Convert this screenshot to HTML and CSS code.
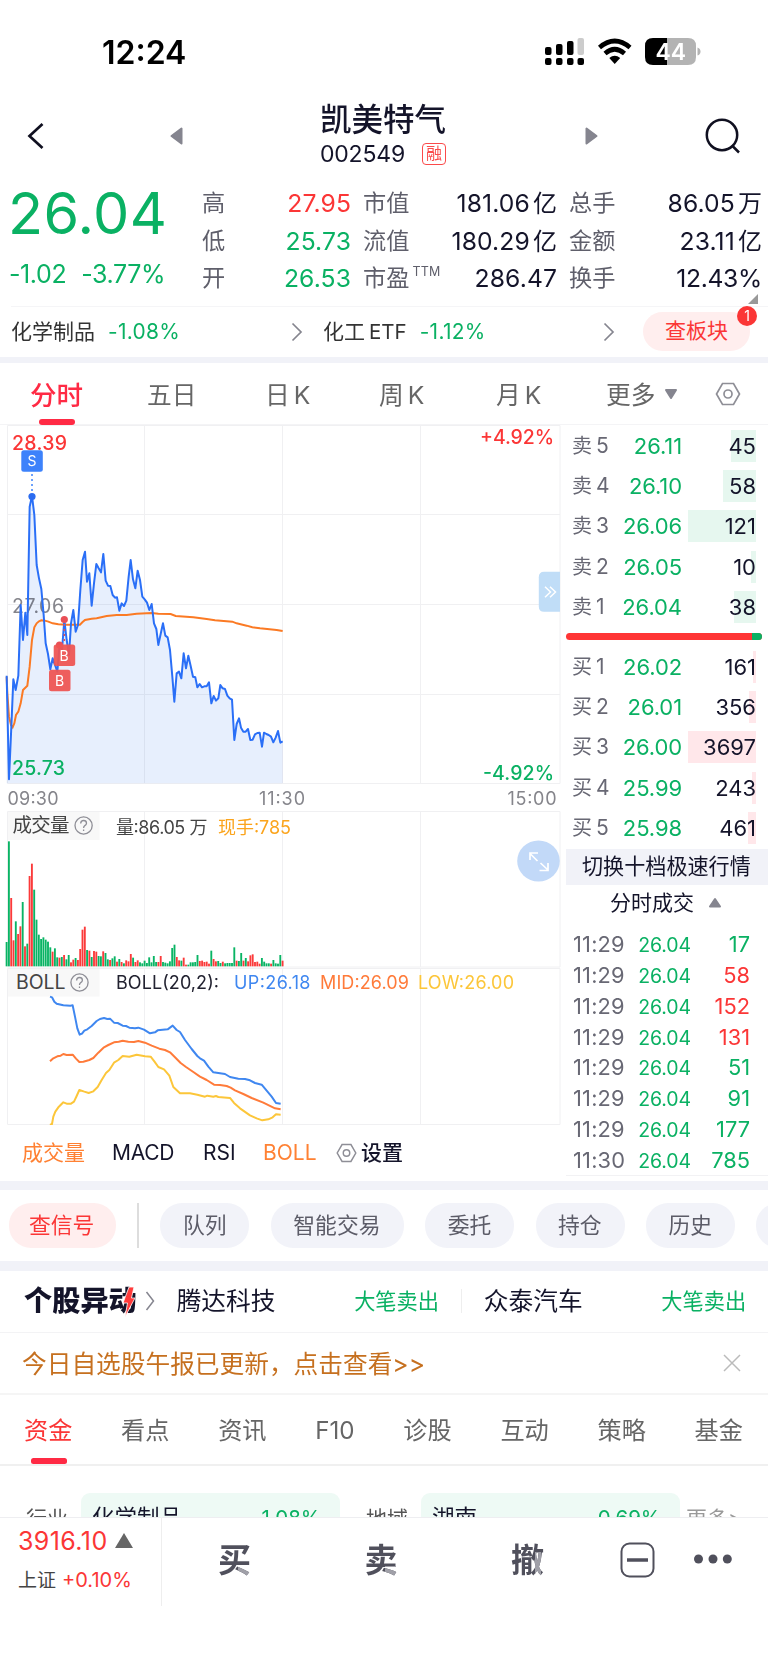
FILE: index.html
```
<!DOCTYPE html>
<html lang="zh-CN">
<head>
<meta charset="utf-8">
<title>凯美特气 002549</title>
<link rel="stylesheet" href="styles.css">
</head>
<body>
<div class="phone">
  <div class="status">
    <span class="clock">12:24</span>
    <svg class="status-icons" width="156" height="28" viewBox="545 38 156 28">
      <g fill="#000">
        <rect x="545" y="47" width="6.5" height="8" rx="2"/><rect x="556" y="44" width="6.5" height="11" rx="2"/><rect x="567" y="41" width="6.5" height="14" rx="2"/>
        <rect x="577.5" y="38" width="6.5" height="17" rx="2" fill="#ccc"/>
        <rect x="545" y="58" width="6.5" height="7" rx="2"/><rect x="556" y="58" width="6.5" height="7" rx="2"/><rect x="567" y="58" width="6.5" height="7" rx="2"/><rect x="577.5" y="58" width="6.5" height="7" rx="2"/>
      </g>
      <g fill="none" stroke="#000" stroke-width="4.6"><path d="M599.5 47.5Q614.7 34.500 630 47.500"/><path d="M605 53.500Q614.700 45 624.500 53.500"/></g>
      <path d="M609.300 58Q614.700 53.500 620.200 58L614.700 64Z"/>
      <path d="M653 38H667V65H653Q645 65 645 57V46Q645 38 653 38Z"/><path d="M667 38H688Q696 38 696 46V57Q696 65 688 65H667Z" fill="#b3b3b3"/>
      <path d="M697.500 47.500Q700.500 48.500 700.500 51.500T697.500 55.500Z" fill="#b3b3b3"/>
      <text x="670.700" y="60" class="battery-text">44</text>
    </svg>
  </div>

  <header class="header">
    <svg class="back" width="18" height="28" viewBox="0 0 18 28"><path d="M15.500 2L2.500 14 15.500 26" fill="none" stroke="#101020" stroke-width="2.700"/></svg>
    <svg class="prev" width="13" height="18" viewBox="0 0 13 18"><path d="M11.500 1.500V16.500L1.500 9Z" fill="#85858f" stroke="#85858f" stroke-width="2" stroke-linejoin="round"/></svg>
    <div class="title">
      <div class="name">凯美特气</div>
      <div class="code"><span>002549</span><i>融</i></div>
    </div>
    <svg class="next" width="13" height="18" viewBox="0 0 13 18"><path d="M1.500 1.500V16.500L11.500 9Z" fill="#85858f" stroke="#85858f" stroke-width="2" stroke-linejoin="round"/></svg>
    <svg class="search" width="36" height="36" viewBox="0 0 36 36"><g fill="none" stroke="#101020" stroke-width="2.500"><circle cx="17" cy="17" r="15.200"/><path d="M27 27.500L34 34.500"/></g></svg>
  </header>

  <section class="quote">
    <div class="last"><div class="price">26.04</div><div class="change"><span>-1.02</span><span>-3.77%</span></div></div>
    <dl class="stats">
      <dt>高</dt><dd class="red">27.95</dd><dt>市值</dt><dd>181.06<b>亿</b></dd><dt>总手</dt><dd>86.05<b>万</b></dd>
      <dt>低</dt><dd class="green">25.73</dd><dt>流值</dt><dd>180.29<b>亿</b></dd><dt>金额</dt><dd>23.11<b>亿</b></dd>
      <dt>开</dt><dd class="green">26.53</dd><dt>市盈<sup>TTM</sup></dt><dd>286.47</dd><dt>换手</dt><dd class="tight">12.43%</dd>
    </dl>
    <svg class="corner" width="10" height="10" viewBox="0 0 10 10"><path d="M10 0V10H0Z" fill="#999"/></svg>
  </section>

  <section class="sector">
    <div class="sector-item first">化学制品<em>-1.08%</em><svg width="12" height="20" viewBox="0 0 12 20"><path d="M1.500 1.500L10 10 1.500 18.500" fill="none" stroke="#85858f" stroke-width="1.700"/></svg></div>
    <div class="sector-item">化工<u>ETF</u><em>-1.12%</em><svg width="12" height="20" viewBox="0 0 12 20"><path d="M1.500 1.500L10 10 1.500 18.500" fill="none" stroke="#85858f" stroke-width="1.700"/></svg></div>
    <div class="sector-pill">查板块<span class="dot">1</span></div>
  </section>

  <nav class="periods">
    <span class="on">分时</span><span>五日</span><span>日<u>K</u></span><span>周<u>K</u></span><span>月<u>K</u></span>
    <span class="more">更多<svg width="14" height="11" viewBox="0 0 14 11"><path d="M2 1H12L7 9Z" fill="#85858f" stroke="#85858f" stroke-width="2" stroke-linejoin="round"/></svg></span>
    <svg class="hex" width="26" height="24" viewBox="0 0 26 24"><g fill="none" stroke="#8e8e96" stroke-width="1.700"><path d="M7.500 1.500H18.500L24.500 12 18.500 22.500H7.500L1.500 12Z"/><circle cx="13" cy="12" r="4"/></g></svg>
  </nav>

  <main class="market">
    <div class="charts">
      <svg class="chart" width="562" height="386" viewBox="0 425 562 386">
        <path class="grid" d="M7.500 425.500H560V783.500H7.500ZM7.500 514.500H560M7.500 604.500H560M7.500 694.500H560M144.500 425V783M282.500 425V783M420.500 425V783"/>
        <text x="12" y="612.500" textLength="52" class="t19 axis">27.06</text>
        <g transform="translate(0 410) scale(.33333)">
          <path class="area" id="price-area"/>
          <path class="avg" d="M20 800L22 850 27 920 33 945 38 952 43 940 48 915 55 905 62 880 69 840 82 827 89 770 96 690 103 652 110 640 117 634 124 631 135 632 145 635 158 640 175 643 200 644 240 644 247 637 255 630 275 626 290 625 320 618 350 615 380 615 410 611 455 609 475 611 512 612 527 618 580 622 620 627 645 631 697 635 710 640 740 647 757 652 780 655 830 660 848 663"/>
          <path class="line" id="price-line"/>
        </g>
        <text x="12" y="449.500" textLength="55" class="t19 red">28.39</text>
        <text x="12" y="774.500" textLength="53" class="t19 green">25.73</text>
        <text x="554" y="444.300" text-anchor="end" textLength="74" class="t19 red">+4.92%</text>
        <text x="554" y="780" text-anchor="end" textLength="71" class="t19 green">-4.92%</text>
        <path d="M32 474V492" stroke="#3d82fb" stroke-width="1.500" stroke-dasharray="2 3"/><circle cx="32" cy="496.500" r="3.600" fill="#2b6cf0"/>
        <rect x="21.300" y="450.300" width="21.500" height="21.500" rx="2.500" fill="#3d82fb"/><text x="32" y="466" text-anchor="middle" class="mark">S</text>
        <path d="M64.300 624V644" stroke="#e35252" stroke-width="1.500" stroke-dasharray="2 3"/><circle cx="64.300" cy="619.500" r="3.600" fill="#e94f56"/><circle cx="59.500" cy="645" r="3.600" fill="#e94f56"/>
        <g fill="#ee5553" fill-opacity=".94"><rect x="53.700" y="644.500" width="21.500" height="21.500" rx="2.500"/><rect x="49" y="669.800" width="21.500" height="21.500" rx="2.500"/></g>
        <text x="64" y="660.500" text-anchor="middle" class="mark">B</text><text x="59.500" y="686" text-anchor="middle" class="mark">B</text>
        <path d="M560 571.500V611.500H544Q538.800 611.500 538.800 606V577Q538.800 571.500 544 571.500Z" transform="translate(0 .2)" fill="#c0ddf7"/>
        <path d="M545 587L550.500 592.300 545 597.600M550 587L555.500 592.300 550 597.600" transform="translate(0 -.3)" fill="none" stroke="#fff" stroke-width="1.500"/>
        <text x="7.500" y="804.500" textLength="51" class="t18 axis">09:30</text><text x="282" y="804.500" text-anchor="middle" textLength="46" class="t18 axis">11:30</text><text x="556.500" y="804.500" text-anchor="end" textLength="49" class="t18 axis">15:00</text>
      </svg>
      <svg class="chart" width="562" height="157" viewBox="0 811 562 157">
        <path class="grid" d="M7.500 811.500H560V967H7.500ZM144.500 811V967M282.500 811V967M420.500 811V967"/>
        <rect x="8" y="812" width="91.500" height="28" fill="#f8f8f8"/>
        <text x="12.500" y="832.300" textLength="57" class="t19 ink">成交量</text>
        <g class="help"><circle cx="83.600" cy="825.500" r="8.600"/><path d="M80.700 823.500Q80.800 820.500 83.600 820.500T86.500 823.200Q86.400 824.700 84.800 825.600 83.600 826.300 83.600 828M83.600 829.600V831"/></g>
        <text x="116" y="833.700" textLength="91.500" class="t18 ink">量:86.05 万</text><text x="218" y="833.700" textLength="73" class="t18 amber">现手:785</text>
        <g id="volume" transform="translate(0 800) scale(.33333)"></g>
        <ellipse cx="538.500" cy="861" rx="21.300" ry="20.500" fill="#c2d9f8"/>
        <path d="M538 860.500L530.500 853M530.500 859.500V852.500H538.500M541 862.500L548.500 869.500M548.500 862.500V870H540" fill="none" stroke="#fff" stroke-width="1.700" transform="translate(-.5 .5)"/>
      </svg>
      <svg class="chart" width="562" height="157" viewBox="0 968 562 157">
        <path class="grid" d="M7.500 968.500H560V1124.500H7.500ZM144.500 968V1125M282.500 968V1125M420.500 968V1125"/>
        <rect x="8" y="969" width="91.500" height="27.500" fill="#f8f8f8"/>
        <text x="16" y="989" textLength="49.500" class="t19 ink">BOLL</text>
        <g class="help"><circle cx="79.500" cy="982.500" r="8.600"/><path transform="translate(-4.100 157)" d="M80.700 823.500Q80.800 820.500 83.600 820.500T86.500 823.200Q86.400 824.700 84.800 825.600 83.600 826.300 83.600 828M83.600 829.600V831"/></g>
        <text x="116" y="989.300" textLength="103" class="t18 dark">BOLL(20,2):</text>
        <text x="234" y="989.300" textLength="76.500" class="t18 up">UP:26.18</text><text x="320" y="989.300" textLength="89" class="t18 mid">MID:26.09</text><text x="418" y="989.300" textLength="96" class="t18 low">LOW:26.00</text>
        <g class="boll" transform="translate(0 800) scale(.33333)">
          <path stroke="#3f87f0" d="M150 590L156 592 163 605 170 611 190 616 211 617 218 616 225 650 232 685 239 704 246 701 253 692 262 688 275 678 290 663 300 657 312 654 322 657 330 656 342 668 353 669 368 677 378 678 388 683 405 685 415 683 432 689 450 700 465 697 473 691 503 688 518 677 530 690 540 696 555 720 575 747 592 768 600 775 612 782 625 800 640 817 675 822 690 831 715 836 735 837 750 841 765 849 785 854 800 872 815 890 828 909 842 911"/>
          <path stroke="#ff7b3a" d="M150 784L160 775 172 769 182 767 190 762 200 765 218 764 228 776 238 786 250 785 268 780 280 774 295 758 312 742 325 735 342 727 356 725 368 722 385 725 402 726 415 723 435 728 455 737 478 746 495 750 510 757 525 772 542 789 558 801 580 816 600 830 620 840 642 854 660 855 680 858 692 863 705 871 730 882 755 894 790 908 825 925 842 928"/>
          <path stroke="#fcc63a" d="M150 975L156 972 160 950 166 935 175 922 190 907 200 911 213 911 222 905 230 888 238 870 253 875 266 879 280 874 293 861 305 840 318 819 328 810 342 788 355 780 368 768 388 770 410 764 435 769 452 770 463 784 475 801 492 808 508 827 520 861 540 880 570 880 592 884 615 890 622 887 640 890 648 888 655 891 690 894 702 909 720 925 750 946 770 955 787 961 805 958 818 952 828 943 842 944"/>
        </g>
      </svg>
      <div class="indicators">
        <span class="on i1">成交量</span><span class="i2">MACD</span><span class="i3">RSI</span><span class="on i4">BOLL</span>
        <svg width="21" height="20" viewBox="0 0 26 24"><g fill="none" stroke="#8e8e96" stroke-width="1.800"><path d="M7.500 1.500H18.500L24.500 12 18.500 22.500H7.500L1.500 12Z"/><circle cx="13" cy="12" r="4"/></g></svg><strong>设置</strong>
      </div>
    </div>

    <aside class="book">
      <div class="levels">
        <div class="lv"><span>卖<u>5</u></span><em>26.11</em><b>45</b><i class="ask" style="width:25px"></i></div>
        <div class="lv"><span>卖<u>4</u></span><em>26.10</em><b>58</b><i class="ask" style="width:33px"></i></div>
        <div class="lv"><span>卖<u>3</u></span><em>26.06</em><b>121</b><i class="ask" style="width:68px"></i></div>
        <div class="lv"><span>卖<u>2</u></span><em>26.05</em><b>10</b><i class="ask" style="width:5px"></i></div>
        <div class="lv"><span>卖<u>1</u></span><em>26.04</em><b>38</b><i class="ask" style="width:22px"></i></div>
      </div>
      <div class="ratio"><i></i></div>
      <div class="levels">
        <div class="lv"><span>买<u>1</u></span><em>26.02</em><b>161</b><i class="bid" style="width:3px"></i></div>
        <div class="lv"><span>买<u>2</u></span><em>26.01</em><b>356</b><i class="bid" style="width:7px"></i></div>
        <div class="lv"><span>买<u>3</u></span><em>26.00</em><b>3697</b><i class="bid" style="width:68px"></i></div>
        <div class="lv"><span>买<u>4</u></span><em>25.99</em><b>243</b><i class="bid" style="width:4px"></i></div>
        <div class="lv"><span>买<u>5</u></span><em>25.98</em><b>461</b><i class="bid" style="width:8px"></i></div>
      </div>
      <div class="switch">切换十档极速行情</div>
      <div class="ticks-title">分时成交<svg width="14" height="11" viewBox="0 0 14 11"><path d="M2 9.500H12L7 2Z" fill="#85858f" stroke="#85858f" stroke-width="2" stroke-linejoin="round"/></svg></div>
      <div class="ticks">
        <div class="tk"><span>11:29</span><em>26.04</em><b class="red">33</b></div>
        <div class="tk"><span>11:29</span><em>26.04</em><b>17</b></div>
        <div class="tk"><span>11:29</span><em>26.04</em><b class="red">58</b></div>
        <div class="tk"><span>11:29</span><em>26.04</em><b class="red">152</b></div>
        <div class="tk"><span>11:29</span><em>26.04</em><b class="red">131</b></div>
        <div class="tk"><span>11:29</span><em>26.04</em><b>51</b></div>
        <div class="tk"><span>11:29</span><em>26.04</em><b>91</b></div>
        <div class="tk"><span>11:29</span><em>26.04</em><b>177</b></div>
        <div class="tk"><span>11:30</span><em>26.04</em><b>785</b></div>
      </div>
    </aside>
  </main>

  <div class="chips">
    <span class="hot">查信号</span><i></i><span>队列</span><span>智能交易</span><span>委托</span><span>持仓</span><span>历史</span><span>预警</span>
  </div>

  <div class="movers">
    <span class="logo">个股异动<svg width="12" height="30" viewBox="0 0 12 30"><path d="M6 0H11L8.500 11H12L2 30 4.500 16H0Z" fill="#ff3b3b" stroke="#fff" stroke-width=".8"/></svg></span>
    <svg class="chev" width="10" height="22" viewBox="0 0 10 22"><path d="M1.500 2L8.500 11 1.500 20" fill="none" stroke="#85858f" stroke-width="1.500"/></svg>
    <span class="m1">腾达科技</span><em>大笔卖出</em><i></i><span class="m2">众泰汽车</span><em class="e2">大笔卖出</em>
  </div>

  <div class="notice"><span>今日自选股午报已更新，点击查看&gt;&gt;</span><svg width="18" height="18" viewBox="0 0 18 18"><path d="M1 1L17 17M17 1L1 17" stroke="#bbb" stroke-width="1.500"/></svg></div>

  <nav class="topics"><span class="on">资金</span><span>看点</span><span>资讯</span><span>F10</span><span>诊股</span><span>互动</span><span>策略</span><span>基金</span></nav>

  <div class="related">
    <span class="r-label">行业</span><div class="r-card">化学制品<em>-1.08%</em></div>
    <span class="r-label second">地域</span><div class="r-card">湖南<em>-0.69%</em></div><span class="r-more">更多&gt;</span>
  </div>

  <footer class="dock">
    <div class="index"><div class="idx-top">3916.10<svg width="18" height="15" viewBox="0 0 18 15"><path d="M9 0L18 15H0Z" fill="#666"/></svg></div><div class="idx-sub">上证<em>+0.10%</em></div></div>
    <span class="act">买</span><span class="act">卖</span><span class="act tall">撤</span>
    <svg class="minus" width="35" height="36" viewBox="0 0 35 36"><rect x="1.500" y="1.500" width="32" height="33" rx="8" fill="none" stroke="#50505c" stroke-width="2"/><path d="M7 18H28" stroke="#50505c" stroke-width="3.500"/></svg>
    <svg class="dots" width="38" height="10" viewBox="0 0 38 10"><g fill="#50505c"><circle cx="4.500" cy="5" r="4.500"/><circle cx="19" cy="5" r="4.500"/><circle cx="33.300" cy="5" r="4.500"/></g></svg>
  </footer>
</div>
<script src="charts.js"></script>
</body>
</html>
```
FILE: charts.js
```
// Minute prices, one x,y pair per point.
const price = '20,797 27,1108 34,950 40,808 47,840 55,797 62,585 69,690 76,608 82,675 89,290 96,258 103,315 110,465 117,505 124,537 131,615 137,700 144,732 151,778 158,745 165,765 172,785 179,700 186,720 193,630 200,690 207,735 213,640 220,600 227,665 234,645 241,540 248,450 255,425 261,515 268,490 275,587 282,520 289,462 296,475 303,487 310,432 317,512 324,527 331,528 338,555 345,563 351,562 358,602 365,580 372,588 379,572 386,500 392,450 399,508 406,535 413,482 420,510 427,560 434,568 441,578 448,600 455,582 462,640 469,657 475,705 482,672 489,640 496,677 503,682 510,720 517,800 523,875 530,790 537,785 544,805 551,730 558,775 565,737 572,768 579,800 586,802 592,832 599,822 606,832 613,829 620,829 627,817 634,880 641,858 648,872 655,865 661,825 668,835 675,837 682,857 689,865 696,869 703,990 710,942 717,925 723,953 730,965 737,965 744,957 751,990 758,989 765,973 772,969 779,968 786,1010 792,968 799,972 806,975 813,980 820,997 827,983 834,963 841,998 848,994';
document.getElementById('price-line').setAttribute('d', 'M' + price);
document.getElementById('price-area').setAttribute('d', 'M' + price + ' L848,1120 20,1120Z');

// Minute volumes: g = falling minute, r = rising minute.
const volume = 'g73 g375 r205 r78 g135 r97 r120 g193 r60 g68 r271 r308 g230 g140 g95 g82 g87 g80 g74 g57 r44 g54 g27 r26 g28 r34 g21 g34 r12 r20 g25 r19 r52 r110 r119 g49 r47 g28 r46 r44 g31 g30 r45 g40 g21 r19 g24 g30 r14 g22 r13 g9 r18 r15 r37 g26 r13 r18 g12 g9 g17 g10 g27 g12 g31 g13 r13 r31 g13 g11 g9 g15 g55 g65 r28 r18 g17 r26 r5 g5 g12 g12 g13 g34 r16 r17 r13 r14 r8 g47 r22 r15 g16 g10 r14 g9 g10 g10 g10 g57 r17 g16 g40 r17 g25 r15 r33 r36 r13 r14 r8 g25 g14 g9 g9 r8 g19 g9 g8 g34 r17';
const layer = document.getElementById('volume');
volume.split(' ').forEach((v, i) => {
  const h = +v.slice(1);
  const bar = document.createElementNS('http://www.w3.org/2000/svg', 'rect');
  bar.setAttribute('x', 17 + i * 6.9);
  bar.setAttribute('y', 499 - h);
  bar.setAttribute('width', 5.6);
  bar.setAttribute('height', h);
  bar.setAttribute('fill', v[0] === 'g' ? '#09b464' : '#fb3a3a');
  layer.appendChild(bar);
});
```
FILE: styles.css
```
* { box-sizing: border-box; }
body { margin: 0; background: #fff; font-family: Inter, "Noto Sans CJK SC", sans-serif; color: #14142a; }
em, i, u, b, dt, dd, dl { font-style: normal; font-weight: 400; text-decoration: none; margin: 0; }
svg { display: block; flex: none; }
.phone { width: 768px; height: 1665px; overflow: hidden; display: flex; flex-direction: column; }
.phone > * { flex: none; }
.red { color: #fb3636; fill: #fb3636; }
.green { color: #0ab163; fill: #0ab163; }

.status { height: 96px; padding: 9px 67px 0 102px; display: flex; align-items: center; justify-content: space-between; }
.clock { font-size: 32px; font-weight: 600; color: #000; letter-spacing: 0; }
.status-icons { margin-top: -2px; }
.battery-text { font: 600 23px Inter, sans-serif; fill: #fff; text-anchor: middle; }

.header { height: 84px; padding: 0 27px; display: grid; grid-template-columns: 143px 150px 126px 152px 1fr; align-items: center; }
.title { display: flex; flex-direction: column; margin-top: -11px; }
.name { font-size: 31.500px; line-height: 42px; font-weight: 500; white-space: nowrap; }
.code { display: flex; align-items: center; justify-content: space-between; font-size: 23px; line-height: 24px; margin-top: 1px; }
.code span { letter-spacing: -.2px; }
.code i { width: 24px; height: 22px; border: 1.500px solid #fb4a4a; border-radius: 4px; color: #fb4a4a; font-size: 16px; line-height: 18px; text-align: center; }
.header .back, .header .prev, .header .next { margin-top: -4px; }
.header .next { justify-self: end; }
.header .search { justify-self: end; margin-top: -4px; }

.quote { height: 126px; position: relative; display: flex; padding: 5px 6px 0 8px; }
.last { width: 194px; color: #0ab163; }
.price { font-size: 57.500px; line-height: 56px; letter-spacing: .4px; }
.change { display: flex; gap: 15px; font-size: 25px; line-height: 32px; margin-top: 17px; margin-left: 1px; letter-spacing: -.4px; }
.stats { flex: 1; display: grid; grid-template-columns: 61px 88px 95px 111px 79px 1fr; grid-auto-rows: 37.500px; line-height: 37px; align-content: start; font-size: 24.700px; letter-spacing: .1px; white-space: nowrap; }
.stats dt { font-size: 23.200px; color: #5f5f6b; letter-spacing: 0; }
.stats dt:nth-of-type(3n+2), .stats dt:nth-of-type(3n) { padding-left: 12px; }
.stats dd { text-align: right; }
.stats dd b { font-size: 24px; margin-left: 3px; }
.stats .tight { letter-spacing: -.3px; }
.stats sup { font-size: 12.500px; line-height: 0; vertical-align: 10px; margin-left: 3px; letter-spacing: .3px; }
.corner { position: absolute; left: 748px; top: 114px; }

.sector { height: 51px; margin: 0 0 0 11px; border-top: 1.500px solid #f5f5f7; display: flex; align-items: center; font-size: 21px; line-height: 30px; color: #333; padding-bottom: 1px; }
.sector-item { width: 292px; display: flex; align-items: center; }
.sector-item.first { width: 292px; margin-right: 20px; }
.sector-item em { color: #0ab163; font-size: 20.900px; margin-left: 13px; letter-spacing: .3px; }
.sector-item u { font-size: 20.500px; margin-left: 4px; }
.sector-item svg { margin-left: auto; }
.sector-pill { position: relative; width: 107px; height: 39px; margin-left: 28px; border-radius: 20px; background: #ffeeee; color: #fb3636; text-align: center; line-height: 38px; }
.dot { position: absolute; right: -7px; top: -6px; width: 20px; height: 20px; border-radius: 50%; background: #fb3636; color: #fff; font-size: 14px; line-height: 20px; }

.periods { height: 68px; border-top: 6px solid #f1f2f8; border-bottom: 1px solid #f4f4f6; display: flex; align-items: center; font-size: 24.700px; color: #666; line-height: 60px; padding: 2px 0 0 30px; }
.periods span { position: relative; width: 119px; margin-left: -5px; white-space: nowrap; }
.periods span:nth-child(n+3) { width: 115px; margin-left: -1px; }
.periods span:nth-child(1) { width: 122px; margin-left: 0; }
.periods span:nth-child(4) { width: 118px; }
.periods span:nth-child(5) { width: 111px; }
.periods u { margin-left: 4px; }
.periods .on { color: #ff2a44; font-size: 26.500px; font-weight: 500; }
.periods .on::after { content: ""; position: absolute; left: 9px; bottom: 0; width: 36px; height: 5.500px; border-radius: 3px; background: #ff2a44; }
.periods .more { display: flex; align-items: center; }
.periods .more svg { margin-left: 9px; }
.periods .hex { margin-left: -6px; margin-top: -2px; }

.market { display: flex; height: 756px; }
.charts { width: 566px; }
.grid { fill: none; stroke: #f0f0f2; }
.area { fill: #e7effd; mix-blend-mode: multiply; }
.line { fill: none; stroke: #2a6ff7; stroke-width: 6; stroke-linejoin: round; }
.avg { fill: none; stroke: #fb7a24; stroke-width: 6; }
.boll path { fill: none; stroke-width: 6; stroke-linejoin: round; }
.t19 { font-size: 19.500px; }
.t19.red, .t19.green { font-weight: 450; }
.t18 { font-size: 18px; }
.axis { fill: #85858b; }
.ink { fill: #444; }
.dark { fill: #222230; }
.amber { fill: #fba41c; }
.up { fill: #3f87f0; }
.mid { fill: #ff7b3a; }
.low { fill: #fcc63a; }
.mark { font-size: 14px; fill: #fff; }
.help { fill: none; stroke: #8e8e96; stroke-width: 1.300; }
.indicators { display: flex; align-items: center; height: 55px; padding-left: 22px; font-size: 21px; line-height: 30px; white-space: nowrap; }
.indicators .on { color: #ff8133; }
.i1 { width: 90px; }
.i2 { width: 91px; letter-spacing: -.3px; }
.i3 { width: 60px; }
.i4 { width: 73px; }
.indicators svg { margin-right: 4px; }
.indicators strong { font-weight: 500; font-size: 21px; }

.book { width: 202px; }
.levels { height: 203px; padding-top: .500px; }
.lv { position: relative; height: 40.400px; display: grid; grid-template-columns: 43px 67px 74px; padding-left: 6px; line-height: 40px; font-size: 22px; align-items: center; }
.lv span { font-size: 20px; color: #686874; }
.lv span u { margin-left: 4px; font-size: 21px; }
.lv em { color: #0ab163; text-align: right; white-space: nowrap; letter-spacing: -.1px; }
.lv b { text-align: right; position: relative; z-index: 1; font-size: 22px; }
.lv i { position: absolute; right: 12px; top: 4px; height: 32px; }
.ask { background: #e6f7ef; }
.bid { background: #ffe7ea; }
.ratio { width: 196px; height: 7px; margin: 5px 0 6px; border-radius: 4px; overflow: hidden; background: #ff3535; display: flex; justify-content: flex-end; }
.ratio i { width: 10px; background: #0ab163; }
.switch { height: 36px; background: #f1f2f8; font-size: 21.100px; line-height: 36px; padding-left: 16px; white-space: nowrap; }
.ticks-title { height: 37px; display: flex; align-items: center; padding: 0 0 2px 44px; font-size: 21px; line-height: 30px; }
.ticks-title svg { margin-left: 14px; }
.ticks { height: 254px; display: flex; flex-direction: column; justify-content: flex-end; overflow: hidden; border-bottom: 1px solid #f2f2f4; }
.tk { flex: none; height: 30.900px; display: grid; grid-template-columns: 51px 67px 59px; padding-left: 7px; line-height: 32px; font-size: 21.800px; color: #0ab163; }
.tk:first-child { opacity: .4; }
.tk span { color: #686874; letter-spacing: .2px; }
.tk em { font-size: 19.500px; text-align: right; line-height: 34px; letter-spacing: -.1px; }
.tk b { text-align: right; }
.tk .red { color: #fb3636; }

.chips { height: 90px; border-top: 9px solid #f1f2f8; border-bottom: 10px solid #f1f2f8; display: flex; align-items: center; padding: 0 0 0 9px; font-size: 21.800px; overflow: hidden; color: #5c5c68; }
.chips span { flex: none; height: 45px; line-height: 44px; padding: 0 22.500px; border-radius: 22px; background: #f2f3f9; margin-right: 21.400px; width: 89px; white-space: nowrap; }
.chips span:nth-child(4) { width: 133px; }
.chips .hot { width: 107px; padding: 0 20px; background: #ffeeee; color: #fb3636; }
.chips i { flex: none; width: 1.500px; height: 45px; background: #ddd; margin-right: 21.500px; }

.movers { height: 62px; border-bottom: 1px solid #f3f3f5; display: flex; align-items: center; padding: 0 0 1px 24px; font-size: 24.700px; line-height: 36px; white-space: nowrap; }
.logo { position: relative; width: 121px; font-size: 28.200px; font-weight: 900; line-height: 40px; }
.logo svg { position: absolute; left: 99px; top: 6px; }
.m1 { width: 178px; margin-left: 22px; }
.movers em { color: #0ab163; font-size: 21.200px; width: 107px; }
.movers i { width: 1px; height: 24px; background: #eee; }
.m2 { width: 178px; margin-left: 22px; }

.notice { height: 62px; border-bottom: 2px solid #f5f5f5; display: flex; align-items: center; justify-content: space-between; padding: 0 27px 1px 22px; font-size: 24.700px; color: #c6701f; }
.notice span { margin-top: -2px; }
.topics { height: 71px; border-bottom: 2px solid #f0f0f0; display: flex; align-items: center; justify-content: space-between; padding: 2px 25px 0 24px; font-size: 24.200px; color: #666; line-height: 67px; }
.topics .on { position: relative; color: #fb3636; }
.topics .on::after { content: ""; position: absolute; left: 7px; bottom: 0; width: 36px; height: 6px; border-radius: 2.500px; background: #ff2a44; }

.related { height: 51px; padding: 27px 0 0 26px; display: flex; overflow: hidden; font-size: 21px; color: #555; line-height: 51px; white-space: nowrap; }
.r-label { width: 55px; }
.r-label.second { width: 55px; margin-left: 26px; }
.r-card { width: 259px; height: 60px; border-radius: 9px; background: #eefaf5; padding: 0 19px 0 11px; display: flex; justify-content: space-between; color: #14142a; font-size: 22.500px; line-height: 49px; }
.r-card em { color: #0ab163; font-size: 20.500px; }
.r-more { color: #999; margin-left: 6px; }

.dock { height: 88px; border-top: 1px solid #eeeef1; background: #fff; display: flex; align-items: center; }
.index { width: 162px; height: 88px; border-right: 1px solid #eee; padding: 6px 0 0 18px; white-space: nowrap; }
.idx-top { display: flex; align-items: center; color: #fb3636; font-size: 25px; line-height: 34px; letter-spacing: .4px; }
.idx-top svg { margin-left: 7px; }
.idx-sub { font-size: 19px; line-height: 28px; margin-top: 8px; color: #444; }
.idx-sub em { color: #fb3636; font-size: 20px; margin-left: 6px; letter-spacing: 0; }
.act { width: 34px; margin: -4px 56.500px 0 56px; font-size: 33px; font-weight: 700; line-height: 40px; color: transparent; background: linear-gradient(#a0a0a8, #a0a0a8) 20px 26px / 14px 14px no-repeat, #50505c; background-clip: text; -webkit-background-clip: text; }
.act.tall { background: linear-gradient(#a0a0a8, #a0a0a8) 24px 12px / 6px 28px no-repeat, #50505c; background-clip: text; -webkit-background-clip: text; }
.minus { margin: -4px 39px 0 18px; }
.dots { margin-top: -5px; }
```
